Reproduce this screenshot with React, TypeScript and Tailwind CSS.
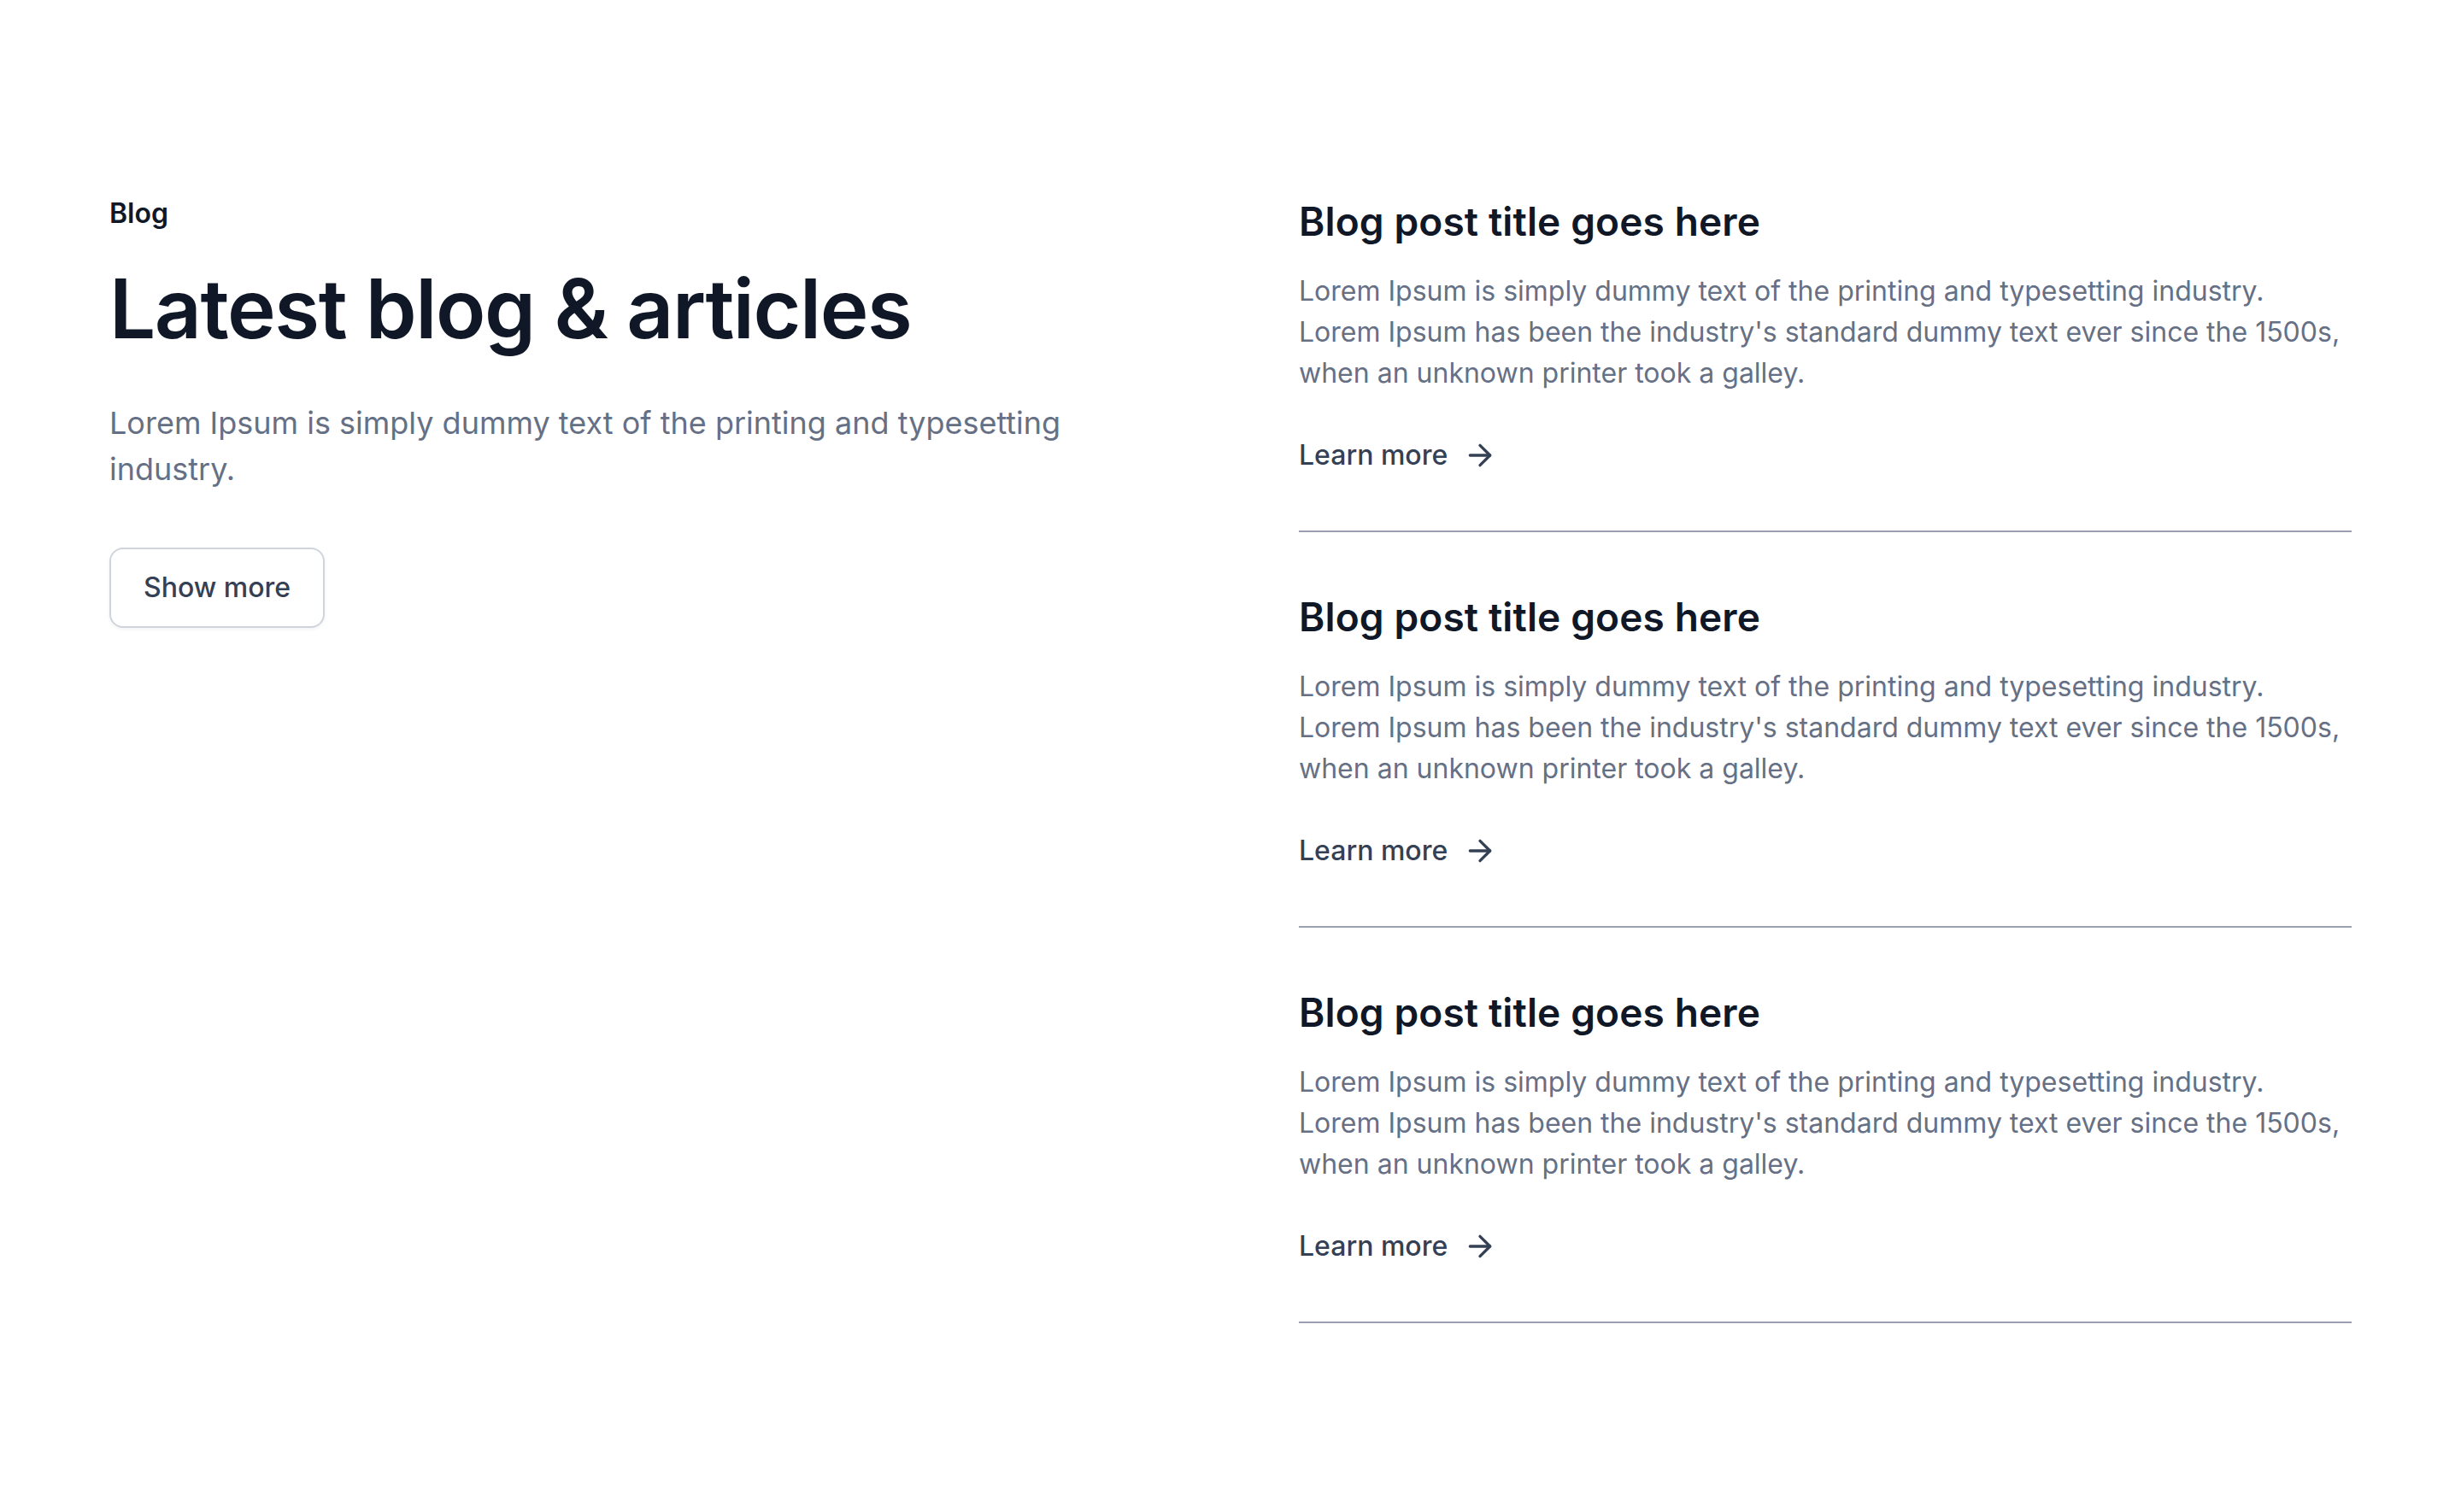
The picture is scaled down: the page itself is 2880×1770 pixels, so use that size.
import React from 'react';
import { ArrowRight } from 'lucide-react';

const posts = [
  {
    title: 'Blog post title goes here',
    lines: [
      'Lorem Ipsum is simply dummy text of the printing and typesetting industry.',
      "Lorem Ipsum has been the industry's standard dummy text ever since the 1500s, when an unknown printer took a galley.",
    ],
  },
  {
    title: 'Blog post title goes here',
    lines: [
      'Lorem Ipsum is simply dummy text of the printing and typesetting industry.',
      "Lorem Ipsum has been the industry's standard dummy text ever since the 1500s, when an unknown printer took a galley.",
    ],
  },
  {
    title: 'Blog post title goes here',
    lines: [
      'Lorem Ipsum is simply dummy text of the printing and typesetting industry.',
      "Lorem Ipsum has been the industry's standard dummy text ever since the 1500s, when an unknown printer took a galley.",
    ],
  },
];

const PostItem: React.FC<{ title: string; lines: string[] }> = ({ title, lines }) => (
  <article className="flex flex-col border-b-2 border-[#9aa0b0] pb-[64px]">
    <h3 className="text-[46px] leading-[70px] font-semibold tracking-[0.003em] text-[#101828]">{title}</h3>
    <p className="mt-[23px] text-[32px] leading-[48px] text-[#667085]">
      {lines[0]}
      <br />
      {lines[1]}
    </p>
    <a href="#" className="mt-[48px] flex items-center gap-4 self-start text-[32px] leading-[48px] font-medium text-[#344054]">
      Learn more
      <ArrowRight size={40} strokeWidth={2} className="translate-x-[2px]" />
    </a>
  </article>
);

const App: React.FC = () => {
  return (
    <div className="min-h-screen bg-white font-['Inter',sans-serif]">
      <section className="grid grid-cols-2 gap-[160px] px-32 pt-[224px] pb-[200px]">
        <div className="flex flex-col items-start">
          <p className="pt-[2px] text-[32px] leading-[48px] font-semibold text-[#101828]">Blog</p>
          <h2 className="mt-[39px] text-[96px] leading-[96px] font-semibold tracking-[-0.015em] text-[#101828]">
            Latest blog &amp; articles
          </h2>
          <p className="mt-[59px] text-[36px] leading-[54px] text-[#667085]">
            Lorem Ipsum is simply dummy text of the printing and typesetting industry.
          </p>
          <button
            type="button"
            className="mt-[65px] h-[94px] px-[38px] rounded-[16px] border-2 border-[#d0d5dd] bg-white text-[32px] font-medium text-[#344054] shadow-[0_2px_4px_rgba(16,24,40,0.05)]"
          >
            Show more
          </button>
        </div>
        <div className="flex flex-col gap-[64px]">
          {posts.map((post, i) => (
            <PostItem key={i} title={post.title} lines={post.lines} />
          ))}
        </div>
      </section>
    </div>
  );
};

export default App;
